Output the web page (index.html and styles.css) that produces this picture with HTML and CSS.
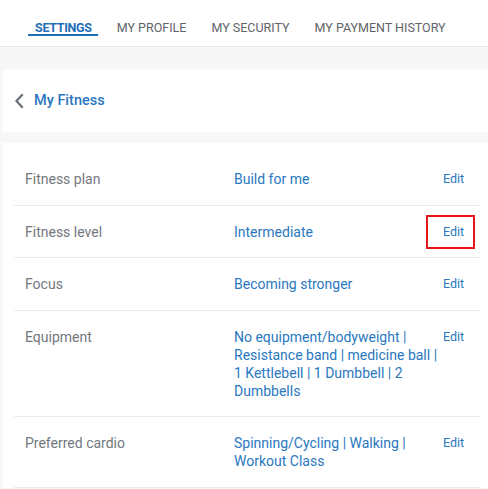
FILE: index.html
```html
<!DOCTYPE html>
<html>
<head>
<meta charset="utf-8">
<link rel="stylesheet" href="styles.css">
</head>
<body>
<nav class="tabs">
  <a class="tab active">SETTINGS</a>
  <a class="tab">MY PROFILE</a>
  <a class="tab">MY SECURITY</a>
  <a class="tab">MY PAYMENT HISTORY</a>
</nav>
<main class="page">
  <section class="card header-card">
    <svg class="chev" width="10" height="16" viewBox="0 0 10 16"><path d="M8 2 L2.5 8 L8 14" fill="none" stroke="#6b7079" stroke-width="2.2" stroke-linecap="square"/></svg>
    <span class="back-title">My Fitness</span>
  </section>
  <section class="card list-card">
    <div class="row">
      <div class="label">Fitness plan</div>
      <div class="value">Build for me</div>
      <div class="edit"><span class="edit-btn">Edit</span></div>
    </div>
    <div class="row">
      <div class="label">Fitness level</div>
      <div class="value">Intermediate</div>
      <div class="edit"><span class="edit-btn highlight">Edit</span></div>
    </div>
    <div class="row">
      <div class="label">Focus</div>
      <div class="value">Becoming stronger</div>
      <div class="edit"><span class="edit-btn">Edit</span></div>
    </div>
    <div class="row">
      <div class="label">Equipment</div>
      <div class="value">No equipment/bodyweight | Resistance band | medicine ball | 1 Kettlebell | 1 Dumbbell | 2 Dumbbells</div>
      <div class="edit"><span class="edit-btn">Edit</span></div>
    </div>
    <div class="row">
      <div class="label">Preferred cardio</div>
      <div class="value">Spinning/Cycling | Walking | Workout Class</div>
      <div class="edit"><span class="edit-btn">Edit</span></div>
    </div>
  </section>
</main>
</body>
</html>
```
FILE: styles.css
```css
* { box-sizing: border-box; }
html, body { margin: 0; padding: 0; }
body {
  font-family: Roboto, "Liberation Sans", sans-serif;
  background: #f7f7f7;
  width: 488px;
  height: 489px;
  overflow: hidden;
}
.tabs {
  background: #fff;
  height: 47px;
  border-bottom: 1px solid #e6e6e6;
  display: flex;
  padding-left: 28px;
  white-space: nowrap;
}
.tab {
  font-size: 12.5px;
  color: #5f6369;
  padding: 20px 0 0 0;
  height: 36px;
  margin-right: 25px;
}
.tab.active {
  color: #1e6fb8;
  font-weight: 700;
  border-bottom: 2.5px solid #1e6fb8;
  letter-spacing: -0.3px;
  padding: 20px 6px 0 7px;
  margin-right: 19px;
}
.page {
  padding: 22px 0 0 3px;
}
.card {
  background: #fff;
}
.header-card {
  height: 63px;
  display: flex;
  align-items: center;
  padding-left: 11px;
  gap: 10px;
}
.back-title {
  color: #2a78c0;
  font-size: 14.5px;
  font-weight: 500;
}
.list-card {
  margin-top: 11px;
  padding: 10px 8px 0 11px;
}
.row {
  display: flex;
  align-items: flex-start;
  padding: 17px 0 16.5px 11px;
  border-bottom: 1px solid #ececec;
  line-height: 18px;
}
.label {
  width: 209px;
  color: #73777e;
  font-size: 14px;
}
.value {
  width: 209px;
  color: #2a78c0;
  font-size: 14px;
}
.edit {
  font-size: 12.5px;
  color: #2a78c0;
  height: 18px;
}
.edit-btn { display: inline-block; vertical-align: top; line-height: 18px; }
.edit-btn.highlight {
  outline: 2px solid #e8151b;
  padding: 6px 9px 6px 15px;
  margin: -6px -9px -6px -15px;
}
```
